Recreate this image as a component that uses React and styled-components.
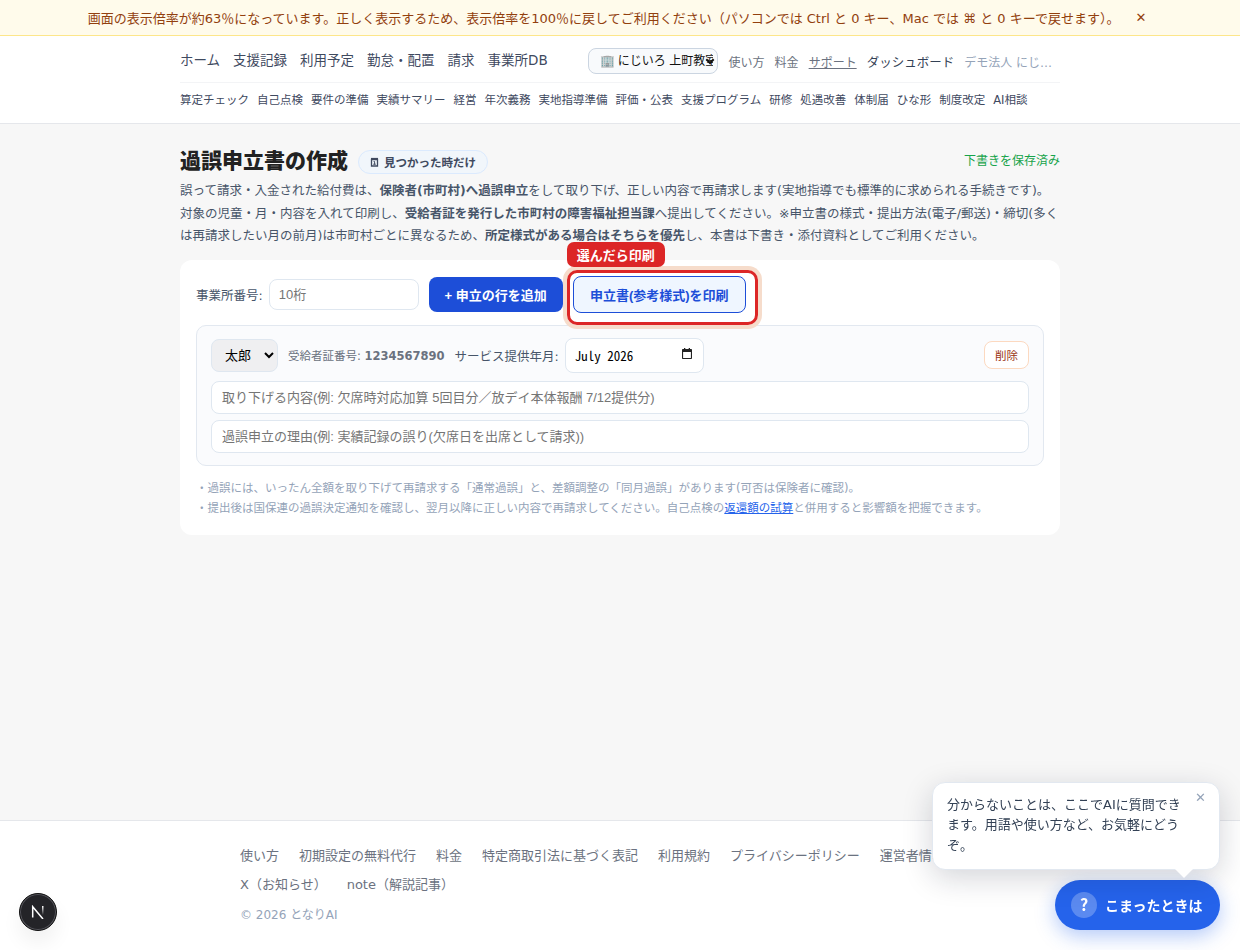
import React from "react";
import styled, { createGlobalStyle, css } from "styled-components";

const GlobalStyle = createGlobalStyle`
  * {
    box-sizing: border-box;
  }

  body {
    margin: 0;
    background: #f7f7f7;
    color: #222;
    font-family: "DejaVu Sans", "Noto Sans CJK JP", sans-serif;
  }

  a {
    color: inherit;
    text-decoration: none;
  }

  button {
    padding: 0;
    border: 0;
    background: none;
    font-family: "Liberation Sans", "Noto Sans CJK JP", sans-serif;
    cursor: pointer;
  }
`;

const MAIN_NAV = ["ホーム", "支援記録", "利用予定", "勤怠・配置", "請求", "事業所DB"];

const SUB_NAV = [
  "算定チェック",
  "自己点検",
  "要件の準備",
  "実績サマリー",
  "経営",
  "年次義務",
  "実地指導準備",
  "評価・公表",
  "支援プログラム",
  "研修",
  "処遇改善",
  "体制届",
  "ひな形",
  "制度改定",
  "AI相談",
];

const FOOTER_LINKS = [
  "使い方",
  "初期設定の無料代行",
  "料金",
  "特定商取引法に基づく表記",
  "利用規約",
  "プライバシーポリシー",
  "運営者情報",
  "X（お知らせ）",
  "note（解説記事）",
];

const Page = styled.div`
  display: flex;
  flex-direction: column;
  height: 950px;
  overflow: hidden;
`;

const ZoomNotice = styled.div`
  display: flex;
  flex: none;
  align-items: center;
  justify-content: center;
  gap: 10px;
  height: 36px;
  border-bottom: 1px solid #fde68a;
  background: #fffbeb;
  color: #92400e;
  font-size: 13px;
  white-space: nowrap;

  button {
    padding: 0 6px;
    color: #92400e;
    font-family: inherit;
    font-size: 13px;
  }
`;

const Header = styled.header`
  flex: none;
  height: 88px;
  border-bottom: 1px solid #e5e7eb;
  background: #fff;
`;

const HeaderInner = styled.div`
  width: 880px;
  margin: 0 auto;
`;

const TopRow = styled.div`
  display: flex;
  align-items: center;
  justify-content: space-between;
  height: 47px;
  border-bottom: 1px solid #f3f4f6;
`;

const MainNav = styled.nav`
  display: flex;
  gap: 13px;
  color: #3f4a5f;
  font-size: 13.5px;
  white-space: nowrap;
`;

const UserNav = styled.div`
  display: flex;
  align-items: center;
  gap: 10px;
  width: 472px;
  padding-top: 4px;
  color: #6b7280;
  font-size: 12px;
  white-space: nowrap;
`;

const FacilityPicker = styled.div`
  position: relative;
  flex: none;
  width: 130.6px;
  height: 26px;

  svg {
    position: absolute;
    top: 10px;
    right: 4px;
    pointer-events: none;
  }
`;

const FacilitySelect = styled.select`
  display: block;
  width: 130px;
  height: 26px;
  padding: 2px 4px 2px 10.5px;
  border: 1px solid #cbd5e1;
  border-radius: 8px;
  background: #f8fafc;
  color: #111;
  font-family: "Liberation Sans", "Noto Sans CJK JP", sans-serif;
  font-size: 12px;
  appearance: none;
`;

const SupportLink = styled.a`
  text-decoration: underline;
`;

const DashboardLink = styled.a`
  color: #334155;
  font-size: 12.5px;
`;

const AccountName = styled.span`
  overflow: hidden;
  max-width: 90px;
  color: #94a3b8;
  text-overflow: ellipsis;
`;

const SubNav = styled.nav`
  display: flex;
  gap: 8px;
  padding-top: 8px;
  color: #3f4a5f;
  font-size: 11.5px;
  line-height: 18px;
  white-space: nowrap;
`;

const Main = styled.main`
  flex: 1;
  width: 880px;
  margin: 0 auto;
  padding-top: 24px;
`;

const TitleRow = styled.div`
  display: flex;
  align-items: center;
  height: 27px;
`;

const Title = styled.h1`
  margin: 0;
  color: #222;
  font-size: 21px;
  font-weight: 800;
  line-height: 27px;
`;

const Timing = styled.span`
  display: flex;
  align-items: center;
  gap: 5px;
  width: 130px;
  height: 24px;
  margin: 1px auto 0 10px;
  padding: 0 0 0 11px;
  border: 1px solid #dbeafe;
  border-radius: 12px;
  background: #f1f6fb;
  color: #3f4a5f;
  font-size: 11.5px;
  font-weight: 700;
  white-space: nowrap;
`;

const SaveState = styled.span`
  margin-bottom: 4px;
  color: #16a34a;
  font-size: 12px;
`;

const Lead = styled.p`
  margin: 5px 0 12px;
  color: #475569;
  font-size: 12.5px;
  line-height: 22.5px;
`;

const Card = styled.section`
  height: 275px;
  padding: 16px;
  border-radius: 12px;
  background: #fff;
`;

const Toolbar = styled.div`
  display: flex;
  align-items: center;
  height: 37px;
  color: #475569;
  font-size: 12.5px;
`;

const fieldStyle = css`
  border: 1px solid #dfe7f0;
  border-radius: 8px;
  background: #fff;
  font-size: 13px;

  &::placeholder {
    color: #757575;
  }
`;

const OfficeInput = styled.input`
  ${fieldStyle}
  width: 150px;
  height: 31px;
  margin: 0 10px 0 6px;
  padding: 0 9px;
  font-family: "Liberation Sans", "Noto Sans CJK JP", sans-serif;
`;

const AddButton = styled.button`
  width: 134px;
  height: 35px;
  border-radius: 8px;
  background: #1d4ed8;
  color: #fff;
  font-size: 13px;
  font-weight: 700;
`;

const PrintGuide = styled.div`
  position: relative;
  margin-left: 10px;
`;

const PrintButton = styled.button`
  display: block;
  width: 173px;
  height: 37px;
  border: 1px solid #1d4ed8;
  border-radius: 8px;
  background: #eff6ff;
  color: #1d4ed8;
  font-size: 13px;
  font-weight: 700;
`;

const GuideRing = styled.div`
  position: absolute;
  top: -6px;
  left: -6px;
  width: 191px;
  height: 55px;
  border: 3px solid #dc2626;
  border-radius: 10px;
  box-shadow: 0 0 0 4px #f6dccb;
  pointer-events: none;
`;

const GuideLabel = styled.div`
  position: absolute;
  top: -34px;
  left: -6px;
  width: 98px;
  height: 25px;
  border-radius: 7px;
  background: #dc2626;
  color: #fff;
  font-size: 13px;
  font-weight: 700;
  line-height: 27px;
  text-align: center;
  white-space: nowrap;
`;

const Claim = styled.div`
  display: flex;
  flex-direction: column;
  height: 141px;
  margin-top: 12px;
  padding: 12px 14px;
  border: 1px solid #e2e8f0;
  border-radius: 10px;
  background: #fafbfd;
`;

const ClaimHead = styled.div`
  display: flex;
  align-items: center;
  height: 35px;
  margin-bottom: 8px;
  color: #475569;
  font-size: 12.5px;
`;

const ChildSelect = styled.select`
  ${fieldStyle}
  width: 67px;
  height: 33px;
  padding: 0 9px;
  background: #efeff1;
  color: #000;
  font-family: "Liberation Sans", "Noto Sans CJK JP", sans-serif;
`;

const Certificate = styled.span`
  margin: 0 10px;
  color: #6b7280;
  font-size: 11.5px;
`;

const MonthField = styled.button`
  ${fieldStyle}
  display: flex;
  align-items: center;
  justify-content: space-between;
  width: 139px;
  height: 35px;
  margin-left: 6px;
  padding: 0 10px 0 9px;
  color: #000;
  font-family: "Noto Sans Mono CJK JP", monospace;

  svg {
    margin-bottom: 2px;
  }
`;

const DeleteButton = styled.button`
  width: 45px;
  height: 28px;
  margin-left: auto;
  border: 1px solid #fcd9c0;
  border-radius: 8px;
  background: #fff;
  color: #9a3412;
  font-size: 11.5px;
`;

const TextInput = styled.input`
  ${fieldStyle}
  width: 100%;
  height: 33px;
  padding: 0 10px;
  font-family: "Liberation Sans", "Noto Sans CJK JP", sans-serif;

  & + & {
    margin-top: 6px;
  }
`;

const Notes = styled.div`
  margin-top: 12px;
  color: #94a3b8;
  font-size: 11.5px;
  line-height: 20px;

  a {
    color: #2563eb;
    text-decoration: underline;
  }
`;

const Footer = styled.footer`
  flex: none;
  height: 130px;
  border-top: 1px solid #e5e7eb;
  background: #fff;
`;

const FooterInner = styled.div`
  width: 760px;
  margin: 0 auto;
  padding-top: 24px;
`;

const FooterLinks = styled.div`
  display: flex;
  flex-wrap: wrap;
  gap: 8px 20px;
  color: #6b7280;
  font-size: 13px;
  line-height: 21px;
`;

const Copyright = styled.div`
  margin-top: 11px;
  color: #94a3b8;
  font-size: 12px;
  line-height: 18px;
`;

const HelpDock = styled.div`
  position: fixed;
  right: 20px;
  bottom: 20px;
  display: flex;
  flex-direction: column;
  align-items: flex-end;
  gap: 10px;
`;

const HelpBubble = styled.div`
  position: relative;
  width: 288px;
  height: 88px;
  padding: 12px 36px 0 14px;
  border: 1px solid #e2e8f0;
  border-radius: 13px;
  background: #fff;
  box-shadow: 0 8px 30px rgba(15, 23, 42, 0.18);
  color: #334155;
  font-size: 13px;
  line-height: 20.4px;

  &::after {
    content: "";
    position: absolute;
    right: 26px;
    bottom: -9px;
    border: solid transparent;
    border-width: 9px 9px 0;
    border-top-color: #fff;
  }

  button {
    position: absolute;
    top: 7px;
    right: 13px;
    color: #94a3b8;
    font-family: inherit;
    font-size: 13px;
    line-height: 16px;
  }
`;

const HelpButton = styled.button`
  display: flex;
  align-items: center;
  gap: 8px;
  width: 165px;
  height: 50px;
  padding: 0 16px;
  border-radius: 25px;
  background: #2563eb;
  box-shadow: 0 6px 20px rgba(37, 99, 235, 0.35);
  color: #fff;
  font-size: 14px;
  font-weight: 700;
  white-space: nowrap;
`;

const QuestionMark = styled.span`
  flex: none;
  width: 26px;
  height: 26px;
  border-radius: 50%;
  background: rgba(255, 255, 255, 0.25);
  font-family: "Noto Sans CJK JP", sans-serif;
  font-size: 16px;
  line-height: 25px;
  text-align: center;
`;

const DevBadge = styled.div`
  position: fixed;
  bottom: 19px;
  left: 19px;
  display: flex;
  width: 38px;
  height: 38px;
  border: 1px solid #111;
  border-radius: 50%;
  background: #242428;
  box-shadow: inset 0 0 0 1px #55555c, 0 12px 20px rgba(0, 0, 0, 0.06);

  svg {
    margin: auto;
  }
`;

const NextMark = () => (
  <svg width="14" height="14" viewBox="0 0 14 14" fill="none">
    <defs>
      <linearGradient id="stem" x1="0" y1="1" x2="0" y2="10" gradientUnits="userSpaceOnUse">
        <stop stopColor="#fff" />
        <stop offset="1" stopColor="#fff" stopOpacity="0" />
      </linearGradient>
    </defs>
    <path d="M1.7 12.5V1.7L12 14" stroke="#fff" strokeWidth="1.5" />
    <rect x="11" y="1" width="1.5" height="9.5" fill="url(#stem)" />
  </svg>
);

const CalendarDay = () => (
  <svg width="9" height="10" viewBox="0 0 9 10" fill="none" stroke="#3f4a5f">
    <path d="M1.5 2.5h6v6.500h-6z" strokeWidth="1.3" />
    <path d="M1 1.800h7" strokeWidth="1.8" />
    <path d="M3.6 4.5h1v3M3.2 7.200h2.6" strokeWidth="1" />
  </svg>
);

const PickerIcon = () => (
  <svg width="12" height="12" viewBox="0 0 12 12">
    <path
      fill="#222"
      fillRule="evenodd"
      d="M3 1V0h1.300v1h3.400V0H9v1h1c.6 0 1 .4 1 1v8c0 .6-.4 1-1 1H2c-.6 0-1-.4-1-1V2c0-.6.4-1 1-1zM2.100 4v5.900h7.800V4z"
    />
  </svg>
);

const Chevron = () => (
  <svg width="10" height="7" viewBox="0 0 10 7" fill="none">
    <path d="M1.300 1.300L5 5l3.700-3.700" stroke="#111" strokeWidth="2" />
  </svg>
);

const App = () => {
  return (
    <Page>
      <GlobalStyle />
      <ZoomNotice>
        <span>
          画面の表示倍率が約63％になっています。正しく表示するため、表示倍率を100％に戻してご利用ください（パソコンでは Ctrl と 0 キー、Mac では ⌘ と 0 キーで戻せます）。
        </span>
        <button aria-label="閉じる">✕</button>
      </ZoomNotice>

      <Header>
        <HeaderInner>
          <TopRow>
            <MainNav>
              {MAIN_NAV.map((label) => (
                <a href="#" key={label}>{label}</a>
              ))}
            </MainNav>
            <UserNav>
              <FacilityPicker>
                <FacilitySelect>
                  <option>🏢 にじいろ 上町教室</option>
                </FacilitySelect>
                <Chevron />
              </FacilityPicker>
              <a href="#">使い方</a>
              <a href="#">料金</a>
              <SupportLink href="#">サポート</SupportLink>
              <DashboardLink href="#">ダッシュボード</DashboardLink>
              <AccountName>デモ法人 にじいろ</AccountName>
            </UserNav>
          </TopRow>
          <SubNav>
            {SUB_NAV.map((label) => (
              <a href="#" key={label}>{label}</a>
            ))}
          </SubNav>
        </HeaderInner>
      </Header>

      <Main>
        <TitleRow>
          <Title>過誤申立書の作成</Title>
          <Timing>
            <CalendarDay />
            見つかった時だけ
          </Timing>
          <SaveState>下書きを保存済み</SaveState>
        </TitleRow>
        <Lead>
          誤って請求・入金された給付費は、<b>保険者(市町村)へ過誤申立</b>をして取り下げ、正しい内容で再請求します(実地指導でも標準的に求められる手続きです)。対象の児童・月・内容を入れて印刷し、<b>受給者証を発行した市町村の障害福祉担当課</b>へ提出してください。※申立書の様式・提出方法(電子/郵送)・締切(多くは再請求したい月の前月)は市町村ごとに異なるため、<b>所定様式がある場合はそちらを優先</b>し、本書は下書き・添付資料としてご利用ください。
        </Lead>

        <Card>
          <Toolbar>
            <label htmlFor="office">事業所番号:</label>
            <OfficeInput id="office" placeholder="10桁" />
            <AddButton>+ 申立の行を追加</AddButton>
            <PrintGuide>
              <PrintButton>申立書(参考様式)を印刷</PrintButton>
              <GuideRing />
              <GuideLabel>選んだら印刷</GuideLabel>
            </PrintGuide>
          </Toolbar>

          <Claim>
            <ClaimHead>
              <ChildSelect>
                <option>太郎</option>
              </ChildSelect>
              <Certificate>
                受給者証番号: <b>1234567890</b>
              </Certificate>
              <span>サービス提供年月:</span>
              <MonthField>
                July 2026
                <PickerIcon />
              </MonthField>
              <DeleteButton>削除</DeleteButton>
            </ClaimHead>
            <TextInput placeholder="取り下げる内容(例: 欠席時対応加算 5回目分／放デイ本体報酬 7/12提供分)" />
            <TextInput placeholder="過誤申立の理由(例: 実績記録の誤り(欠席日を出席として請求))" />
          </Claim>

          <Notes>
            <div>・過誤には、いったん全額を取り下げて再請求する「通常過誤」と、差額調整の「同月過誤」があります(可否は保険者に確認)。</div>
            <div>
              ・提出後は国保連の過誤決定通知を確認し、翌月以降に正しい内容で再請求してください。自己点検の<a href="#">返還額の試算</a>と併用すると影響額を把握できます。
            </div>
          </Notes>
        </Card>
      </Main>

      <Footer>
        <FooterInner>
          <FooterLinks>
            {FOOTER_LINKS.map((label) => (
              <a href="#" key={label}>{label}</a>
            ))}
          </FooterLinks>
          <Copyright>© 2026 となりAI</Copyright>
        </FooterInner>
      </Footer>

      <HelpDock>
        <HelpBubble>
          分からないことは、ここでAIに質問できます。用語や使い方など、お気軽にどうぞ。
          <button aria-label="閉じる">✕</button>
        </HelpBubble>
        <HelpButton>
          <QuestionMark>?</QuestionMark>
          こまったときは
        </HelpButton>
      </HelpDock>

      <DevBadge>
        <NextMark />
      </DevBadge>
    </Page>
  );
};

export default App;
